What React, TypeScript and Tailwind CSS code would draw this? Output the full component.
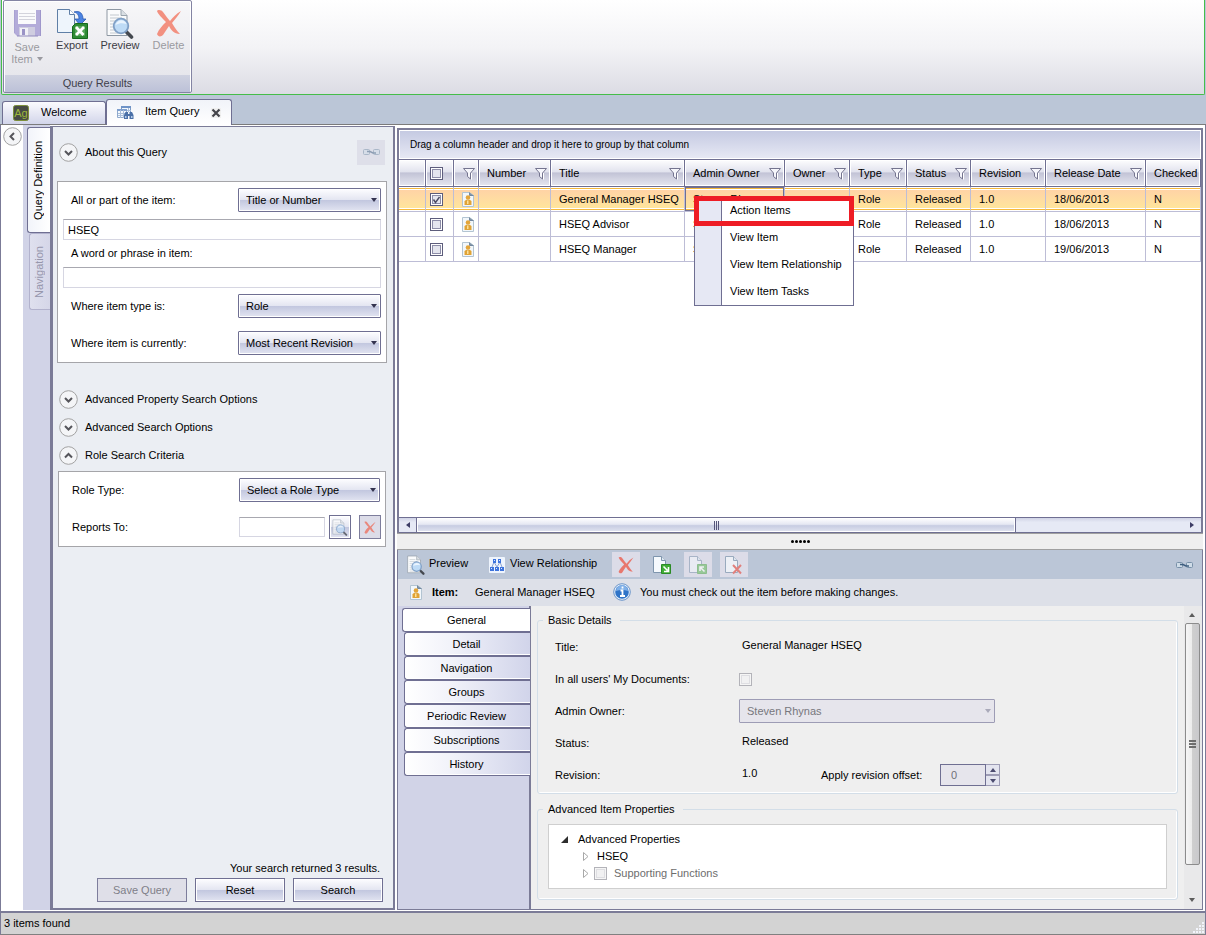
import { useState, type ReactNode } from "react";
import clsx from "clsx";

const face =
  "bg-[linear-gradient(#fdfdff,#e3e5f1_50%,#c2c7df_51%,#e2e4f1)] shadow-[inset_0_0_0_1px_#fff]";

const columns = [
  { label: "Number", width: "w-[72px]", filter: true },
  { label: "Title", width: "w-[134px]", filter: true },
  { label: "Admin Owner", width: "w-[100px]", filter: true },
  { label: "Owner", width: "w-[65px]", filter: true },
  { label: "Type", width: "w-[57px]", filter: true },
  { label: "Status", width: "w-[64px]", filter: true },
  { label: "Revision", width: "w-[75px]", filter: true },
  { label: "Release Date", width: "w-[100px]", filter: true },
  { label: "Checked", width: "w-auto", filter: false },
];

const items = [
  { title: "General Manager HSEQ", date: "18/06/2013" },
  { title: "HSEQ Advisor", date: "18/06/2013" },
  { title: "HSEQ Manager", date: "19/06/2013" },
];

const menuItems = ["Action Items", "View Item", "View Item Relationship", "View Item Tasks"];

const detailTabs = [
  "General",
  "Detail",
  "Navigation",
  "Groups",
  "Periodic Review",
  "Subscriptions",
  "History",
];

function FloppyIcon() {
  return (
    <svg width="27" height="28" viewBox="0 0 27 28">
      <path d="M0 1h27v26H3l-3-3z" fill="#b3abd9" />
      <path d="M0 1v23M26.500 1v26" stroke="#9f97cb" />
      <path d="M4 1h18v14H4z" fill="#fafafc" />
      <path d="M5 4.500h16M5 7.500h16M5 10.500h16" stroke="#d3d3dc" />
      <path d="M5 18h16v9H5z" fill="#cfcde0" />
      <path d="M6 19h8v8H6z" fill="#f1f1f6" />
      <path d="M8 20h3v6H8z" fill="#9a93c6" />
      <path d="M3 27h21" stroke="#918abd" />
    </svg>
  );
}

function ExportIcon() {
  return (
    <svg width="31" height="31" viewBox="0 0 31 31">
      <path d="M.5 1.500h12l5 5v18H.5z" fill="#eef5fc" stroke="#5f7fa6" />
      <path d="M12.500 1.500v5h5" fill="#fff" stroke="#5f7fa6" />
      <path d="M17 4c6-2 9 2 9 7h3l-6 6-5-6h4c0-3-1-6-5-7z" fill="#4b83e2" stroke="#2a5bb4" strokeWidth=".8" />
      <path d="M15.500 18.500l3-3h12v15h-15z" fill="#2e8b34" stroke="#156a1c" />
      <path d="M18 18h10v10H18z" fill="#78c07a" opacity=".5" />
      <path d="M19 19l7.500 8M27 19l-8 8" stroke="#fff" strokeWidth="2.800" />
    </svg>
  );
}

function PreviewIcon({ className }: { className?: string }) {
  return (
    <svg viewBox="0 0 28 31" className={className}>
      <path d="M1 1.500h14l6 6v20H1z" fill="#fafbfc" stroke="#8e98a3" />
      <path d="M15 1.500v6h6" fill="#d9dfe4" stroke="#9aa4ae" />
      <path d="M4 7h9M4 10h12M4 13h5M4 16h3M4 19h3M4 22h5M4 25h8" stroke="#c2c8ce" />
      <path d="M20.500 24l5 5" stroke="#44484f" strokeWidth="3.600" strokeLinecap="round" />
      <circle cx="15" cy="18" r="7.300" fill="#b9d8f5" fillOpacity=".92" stroke="#7f9fc6" strokeWidth="1.800" />
      <path d="M9.500 17c2-6 9-6 11-1-4-1-7-1-11 1z" fill="#eaf4fe" />
    </svg>
  );
}

function CrossIcon({ className, color = "#f29080" }: { className?: string; color?: string }) {
  return (
    <svg viewBox="0 0 26 28" className={className} fill={color}>
      <path d="M1 2C2 0 6 1 7 3c3 4 5 7 7 9 3-4 6-7 11-10-3 5-6 8-9 12 3 5 5 8 8 11-6 0-9-4-11-8-2 3-4 6-6 9-2 2-5 2-6-1 2-5 5-8 9-12C6 9 2 5 1 2z" />
    </svg>
  );
}

function AgLogo() {
  return (
    <svg width="16" height="16" viewBox="0 0 16 16">
      <rect x=".5" y=".5" width="15" height="15" rx="2" fill="#484b44" stroke="#7c8f3a" />
      <text x="8" y="12" fontSize="11" textAnchor="middle" fill="#9db83a" fontFamily="Liberation Sans, sans-serif">
        Ag
      </text>
    </svg>
  );
}

function QueryIcon() {
  return (
    <svg width="17" height="15" viewBox="0 0 17 15">
      <path d="M4.500 1.500h9v8h-9z" fill="#f3f8fd" stroke="#7d9bc4" />
      <path d="M4 1h10v2H4z" fill="#6f93c7" />
      <path d="M.5 4.500h9v8h-9z" fill="#f3f8fd" stroke="#8fa9cd" />
      <path d="M0 4h10v2H0z" fill="#7f9fce" />
      <path d="M1 8.500h8M1 10.500h8M3.500 5v8M6.500 5v8M10 5.500h4M11.500 3v4" stroke="#a9bedb" />
      <path d="M7 14v-4l1.500-3h2.500v2h1.500V7H15l1.500 3v4h-4v-3h-1.500v3z" fill="#4a70a8" />
      <path d="M8 11h1.500v2H8zM14 11h1.500v2H14z" fill="#b5cbe8" />
    </svg>
  );
}

function ChainIcon({ className }: { className?: string }) {
  return (
    <svg width="17" height="8" viewBox="0 0 17 8" fill="none" className={className}>
      <rect x=".5" y="1.500" width="6" height="5" rx="1" fill="#cfdce8" stroke="#7890a8" />
      <rect x="10.500" y="1.500" width="6" height="5" rx="1" fill="#cfdce8" stroke="#7890a8" />
      <path d="M4 3.500h3l3 1.500h3" stroke="#3f5f80" strokeWidth="1.500" />
    </svg>
  );
}

function FunnelIcon() {
  return (
    <svg width="12" height="13" viewBox="0 0 12 13" className="shrink-0">
      <path d="M.5 1.500h11L7.500 6v6l-3-2.500V6z" fill="#f6f6fb" stroke="#74748f" />
      <path d="M8.500 6v6.500" stroke="#fff" />
    </svg>
  );
}

function RoleIcon() {
  return (
    <svg width="12" height="15" viewBox="0 0 12 15">
      <path d="M.5.5h7l4 3v11H.5z" fill="#f2f7fb" stroke="#b3c4d2" />
      <path d="M7.500.5v3h4" fill="#8396a8" stroke="#7388a0" />
      <circle cx="6" cy="5.500" r="2.300" fill="#e3a53a" />
      <path d="M2.500 13V9.500c0-2.500 7-2.500 7 0V13z" fill="#e0a336" />
      <path d="M5 8.500h1.500V12H5z" fill="#fbe09a" />
    </svg>
  );
}

function RelationIcon() {
  return (
    <svg width="16" height="16" viewBox="0 0 16 16">
      <rect width="16" height="16" rx="1" fill="#eef4fd" />
      <path d="M5 5l-2 5M5 5l3 5M11 5l-3 5M11 5l2 5" stroke="#8aa3d4" />
      <path d="M4 2h3v4H4zM9 2h3v4H9zM1 10h4v4H1zM6 10h4v4H6zM11 10h4v4h-4z" fill="#3d73dc" />
      <path d="M5 3h1v1H5zM10 3h1v1h-1zM2 11h1v1H2zM7 11h1v1H7zM12 11h1v1h-1z" fill="#dbe8ff" />
    </svg>
  );
}

function PageIcon({ children }: { children: ReactNode }) {
  return (
    <svg width="19" height="20" viewBox="0 0 19 20">
      <path d="M.5 1.500h8l4 4v12H.5z" fill="#f5f9fd" stroke="#7e95ad" />
      <path d="M8.500 1.500v4h4" fill="#dfe9f2" stroke="#7e95ad" />
      {children}
    </svg>
  );
}

function InfoIcon() {
  return (
    <svg width="18" height="18" viewBox="0 0 18 18">
      <circle cx="9" cy="9" r="8.300" fill="#e4eefa" stroke="#6c95c9" />
      <circle cx="9" cy="9" r="6.800" fill="#2f74c8" />
      <path d="M3 8a6 6 0 0 1 12 0c-4-1.500-8-1.500-12 0z" fill="#7fb0e8" />
      <path d="M9.500 3.500v2M7.500 7.500h2v5M7 13h5" stroke="#fff" strokeWidth="1.800" fill="none" />
    </svg>
  );
}

function Arrow({ dir, className }: { dir: "up" | "down" | "left" | "right"; className?: string }) {
  const d = {
    up: "M0 5l3-4 3 4z",
    down: "M0 1l3 4 3-4z",
    left: "M5 0L1 3l4 3z",
    right: "M1 0l4 3-4 3z",
  }[dir];
  return (
    <svg width="6" height="6" viewBox="0 0 6 6" fill="currentColor" className={className}>
      <path d={d} />
    </svg>
  );
}

function CircleButton({ dir, label }: { dir: "up" | "down" | "left"; label: string }) {
  const d = { up: "M6 11.500L9.500 8l3.500 3.500", down: "M6 8l3.500 3.500L13 8", left: "M11 6L7.500 9.500 11 13" }[dir];
  return (
    <button type="button" aria-label={label} className="shrink-0">
      <svg width="19" height="19" viewBox="0 0 19 19" fill="none">
        <circle cx="9.500" cy="9.500" r="8.800" fill="#f4f5f7" stroke="#a2a2a2" />
        <path d={d} stroke="#55555b" strokeWidth="2" />
      </svg>
    </button>
  );
}

function Accordion({ dir, label }: { dir: "up" | "down"; label: string }) {
  return (
    <div className="flex items-center gap-[7px] h-7 pl-1.5">
      <CircleButton dir={dir} label={label} />
      <span>{label}</span>
    </div>
  );
}

function Select({ id, value, disabled, className }: { id: string; value: string; disabled?: boolean; className?: string }) {
  return (
    <div className={clsx("relative", className)}>
      <select
        id={id}
        disabled={disabled}
        className={clsx(
          "appearance-none w-full h-6 border pl-[7px] pr-3 rounded-[1px] disabled:opacity-100",
          disabled ? "bg-[#e6e5ec] border-[#9d9cb5] text-[#77777d]" : `border-[#6f6f92] text-black ${face}`
        )}
      >
        <option>{value}</option>
      </select>
      <Arrow
        dir="down"
        className={clsx("absolute right-1 top-[9px] pointer-events-none", disabled ? "text-[#aaaaba]" : "text-[#33334f]")}
      />
    </div>
  );
}

function Check({ label, checked, disabled }: { label: string; checked?: boolean; disabled?: boolean }) {
  return (
    <span className="relative block size-[13px]">
      <input
        type="checkbox"
        aria-label={label}
        defaultChecked={checked}
        disabled={disabled}
        className={clsx(
          "peer appearance-none block size-[13px] border",
          disabled
            ? "border-[#b3b3b9] bg-[#f1f1f2] shadow-[inset_0_0_0_1px_#f5f5f5,inset_0_0_0_2px_#dedee2]"
            : "border-[#5d5d7c] bg-[#e4e5ee] shadow-[inset_0_0_0_1px_#fff,inset_0_0_0_2px_#8d8da8]"
        )}
      />
      <svg viewBox="0 0 13 13" fill="none" className="hidden peer-checked:block absolute inset-0 pointer-events-none">
        <path d="M3.500 6.500l2 3 4-5.500" stroke="#4a4a63" strokeWidth="1.400" />
      </svg>
    </span>
  );
}

function RibbonButton({ icon, disabled, className, children }: { icon: ReactNode; disabled?: boolean; className: string; children: ReactNode }) {
  return (
    <button
      type="button"
      disabled={disabled}
      className={clsx("flex flex-col items-center leading-3", disabled ? "text-[#9a9aa0]" : "text-[#3c3c44]", className)}
    >
      <span className="h-8 flex items-center">{icon}</span>
      <span>{children}</span>
    </button>
  );
}

function Ribbon() {
  return (
    <header className="h-[95px] shrink-0 mx-px pl-px border-x border-b border-[#45bd49] rounded-b-[2px] bg-[linear-gradient(#fff,#f3f3f6_50%,#dcdce4)]">
      <div className="w-[189px] h-[93px] flex flex-col border border-[#8384a3] rounded-[2px] bg-[linear-gradient(#f7f7f9,#e3e3e9)] shadow-[inset_0_0_0_1px_#fff]">
        <div className="flex flex-1 pt-[6px] items-start">
          <RibbonButton icon={<FloppyIcon />} disabled className="w-[46px]">
            <span className="block pt-0.5">Save</span>
            <span className="flex items-center justify-center gap-1">
              Item <Arrow dir="down" />
            </span>
          </RibbonButton>
          <RibbonButton icon={<ExportIcon />} className="w-11">Export</RibbonButton>
          <RibbonButton icon={<PreviewIcon className="w-7 h-[31px]" />} className="w-[52px]">Preview</RibbonButton>
          <RibbonButton icon={<CrossIcon className="w-[26px] h-7" />} disabled className="w-[45px]">Delete</RibbonButton>
        </div>
        <div className="h-[17px] mx-px leading-4 text-center text-[#3f3f4b] bg-[linear-gradient(#cfd2e0,#bcc1d8)]">
          Query Results
        </div>
      </div>
    </header>
  );
}

function DocumentTabs() {
  return (
    <nav className="flex h-[30px] shrink-0 items-end pl-[2px] bg-[#bbc6d7] border-b border-[#7b7b7b]">
      <button
        type="button"
        className="flex items-center w-[104px] h-[23px] pl-2.5 pr-3 rounded-t-[3px] border border-b-0 border-[#6f6f92] bg-[linear-gradient(#fbfbfe,#d2d5ea)]"
      >
        <AgLogo />
        <span className="pl-3 pb-0.5">Welcome</span>
      </button>
      <div className="flex items-center w-[126px] h-[26px] -mb-px pl-2.5 rounded-t-[3px] border border-b-0 border-[#6f6f92] bg-[linear-gradient(#f1f3f9,#fff)]">
        <QueryIcon />
        <button type="button" className="pl-[11px] pb-[3px]">Item Query</button>
        <button type="button" aria-label="Close Item Query" className="ml-3 bg-[#f0f0f0]">
          <svg width="10" height="10" viewBox="0 0 10 10">
            <path d="M1.500 1.500l7 7M8.500 1.500l-7 7" stroke="#44444a" strokeWidth="2.200" />
          </svg>
        </button>
      </div>
    </nav>
  );
}

function SideTabs() {
  return (
    <div className="flex shrink-0">
      <div className="w-[22px] pt-0.5 pl-0.5 bg-white">
        <CircleButton dir="left" label="Collapse" />
      </div>
      <div className="flex flex-col items-end w-[27px] pt-0.5 bg-[#d1d3e7]">
        <button
          type="button"
          className="w-[23px] h-[106px] border border-r-0 border-[#6f6f92] rounded-l-[3px] bg-[linear-gradient(90deg,#f2f4fa,#fff)]"
        >
          <span className="block [writing-mode:vertical-rl] rotate-180 leading-5">Query Definition</span>
        </button>
        <button
          type="button"
          className="w-[21px] h-[77px] border border-r-0 border-[#b2b2cd] rounded-l-[3px] bg-[linear-gradient(90deg,#dfe0ee,#d5d6e8)] text-[#9696ac]"
        >
          <span className="block [writing-mode:vertical-rl] rotate-180 leading-[18px]">Navigation</span>
        </button>
      </div>
    </div>
  );
}

const textBox = "border border-[#d6d6e2] border-t-[#a8a8b0] bg-white px-1";

function QueryPanel() {
  return (
    <aside className="flex flex-col w-[345px] shrink-0 mt-px border-2 border-t border-l-[3px] border-[#7b7b97] bg-[#ebeef3]">
      <div className="flex items-center justify-between h-[50px] pr-2">
        <Accordion dir="down" label="About this Query" />
        <button type="button" aria-label="Link" className="flex items-center justify-center w-7 h-[25px] bg-[#dedfe9]">
          <ChainIcon className="opacity-50" />
        </button>
      </div>
      <div className="mt-1 ml-1 mr-1.5 p-1.5 pl-[5px] pr-[5px] pb-[7px] border border-[#a5a5a9] bg-white">
        <div className="flex items-center justify-between pl-2">
          <label htmlFor="match">All or part of the item:</label>
          <Select id="match" value="Title or Number" className="w-[143px]" />
        </div>
        <input aria-label="Item text" defaultValue="HSEQ" className={`block w-full h-[21px] mt-[7px] ${textBox}`} />
        <label htmlFor="phrase" className="block h-[27px] pl-2 leading-[27px]">A word or phrase in item:</label>
        <input id="phrase" className={`block w-full h-[21px] ${textBox}`} />
        <div className="flex items-center justify-between mt-1.5 pl-2">
          <label htmlFor="type">Where item type is:</label>
          <Select id="type" value="Role" className="w-[143px]" />
        </div>
        <div className="flex items-center justify-between mt-[13px] pl-2">
          <label htmlFor="current">Where item is currently:</label>
          <Select id="current" value="Most Recent Revision" className="w-[143px]" />
        </div>
      </div>
      <div className="mt-[22px]">
        <Accordion dir="down" label="Advanced Property Search Options" />
        <Accordion dir="down" label="Advanced Search Options" />
        <Accordion dir="up" label="Role Search Criteria" />
      </div>
      <div className="ml-[5px] mr-[7px] mt-0.5 pl-1.5 pr-1 pt-1.5 pb-[7px] border border-[#a5a5a9] bg-white">
        <div className="flex items-center justify-between pl-[7px] pr-px">
          <label htmlFor="role-type">Role Type:</label>
          <Select id="role-type" value="Select a Role Type" className="w-[141px]" />
        </div>
        <div className="flex items-center mt-[13px] pl-[7px]">
          <label htmlFor="reports" className="flex-1">Reports To:</label>
          <input id="reports" className={`w-[86px] h-5 ${textBox}`} />
          <button type="button" aria-label="Find role" className={`flex items-center justify-center w-[22px] h-6 ml-1 border border-[#6f6f92] ${face}`}>
            <PreviewIcon className="w-4 h-[17px] opacity-75" />
          </button>
          <button type="button" aria-label="Clear role" className="flex items-center justify-center w-[22px] h-6 ml-2 border border-[#7d7d9c] bg-[#dcdce8]">
            <CrossIcon className="w-3 h-[13px]" color="#e9877c" />
          </button>
        </div>
      </div>
      <div className="mt-auto pr-2.5 pb-1.5">
        <p className="h-[17px] pr-[3px] text-right">Your search returned 3 results.</p>
        <div className="flex justify-end gap-2">
          <button type="button" disabled className="w-[90px] h-6 border border-[#7d7d9c] bg-[#dfdfe8] text-[#808088]">Save Query</button>
          <button type="button" className={`w-[90px] h-6 border border-[#6f6f92] ${face}`}>Reset</button>
          <button type="button" className={`w-[90px] h-6 border border-[#6f6f92] ${face}`}>Search</button>
        </div>
      </div>
    </aside>
  );
}

const headCell =
  "h-[27px] p-0 border-r border-b border-[#6f6f92] font-normal text-left bg-[linear-gradient(#fdfdfe,#e2e3ee_45%,#c2c3d6_50%,#e6e7f0)] shadow-[inset_0_0_0_1px_#fff]";
const selectedCell =
  "bg-[linear-gradient(#fff_1px,#f6b93b_1px,#f6b93b_2px,#fff_2px,#fff_3px,#ffd3a6_3px,#ffe59c_21px,#fff_21px,#fff_22px,#f6b93b_22px,#f6b93b_23px,#fff_23px)]";

function ItemGrid() {
  const [selected, setSelected] = useState(0);
  return (
    <section className="relative flex flex-col flex-1 min-h-0 border-2 border-b-0 border-[#7b7b97] bg-white">
      <div className="h-[29px] shrink-0 pl-2.5 leading-[28px] text-[10px] border border-white bg-[linear-gradient(#c5cae2,#e6e8f4)]">
        Drag a column header and drop it here to group by that column
      </div>
      <div className="flex-1 overflow-hidden">
        <table className="w-full table-fixed border-separate border-spacing-0 border-t border-[#6f6f92]">
          <thead>
            <tr>
              <th className={`w-[27px] ${headCell}`} />
              <th className={`w-7 ${headCell}`}>
                <div className="flex pl-1"><Check label="Select all" /></div>
              </th>
              <th className={`w-[25px] ${headCell}`}>
                <div className="flex justify-end pr-[3px]"><FunnelIcon /></div>
              </th>
              {columns.map((c) => (
                <th key={c.label} className={clsx(headCell, c.width)}>
                  <div className="flex items-center justify-between pl-2 pr-[3px]">
                    <span className="whitespace-nowrap">{c.label}</span>
                    {c.filter && <FunnelIcon />}
                  </div>
                </th>
              ))}
            </tr>
          </thead>
          <tbody>
            {items.map((item, i) => {
              const on = i === selected;
              const cell = clsx(
                "h-[25px] p-0 pl-2 border-r border-b border-[#bdbdd6] whitespace-nowrap overflow-hidden",
                on && selectedCell
              );
              return (
                <tr key={item.title} onClick={() => setSelected(i)}>
                  <td className={cell} />
                  <td className={cell}>
                    <div className="-ml-1"><Check label={item.title} checked={i === 0} /></div>
                  </td>
                  <td className={cell}><RoleIcon /></td>
                  <td className={cell} />
                  <td className={cell}>{item.title}</td>
                  <td className={clsx(cell, on && "shadow-[inset_0_0_0_1px_#6f6f92]")}>Steven Rhynas</td>
                  <td className={cell} />
                  <td className={cell}>Role</td>
                  <td className={cell}>Released</td>
                  <td className={cell}>1.0</td>
                  <td className={cell}>{item.date}</td>
                  <td className={cell}>N</td>
                </tr>
              );
            })}
          </tbody>
        </table>
      </div>
      <div className="flex items-center h-4 shrink-0 border-y border-[#6f6f92] bg-[linear-gradient(#d0d3e6,#e6e9f5_30%)] text-[#3d3d66]">
        <button type="button" aria-label="Scroll left" className="flex items-center justify-center w-[18px] h-full border-r border-[#6f6f92]">
          <Arrow dir="left" />
        </button>
        <div className="flex items-center justify-center gap-px w-[599px] h-full border-r border-[#6f6f92] bg-[linear-gradient(#fff,#e6e8f3_45%,#c7cce2_55%,#e2e5f1)] shadow-[inset_0_0_0_1px_#fff]">
          <i className="w-px h-[9px] bg-[#55557a]" />
          <i className="w-px h-[9px] bg-[#55557a]" />
          <i className="w-px h-[9px] bg-[#55557a]" />
        </div>
        <button type="button" aria-label="Scroll right" className="ml-auto px-1.5">
          <Arrow dir="right" />
        </button>
      </div>
      <ContextMenu />
    </section>
  );
}

function ContextMenu() {
  return (
    <ul className="absolute left-[295px] top-[66px] w-40 h-[110px] border border-[#6f6f92] bg-[linear-gradient(90deg,#e6e8f4_26px,#6f6f92_26px,#6f6f92_27px,#fff_27px)]">
      {menuItems.map((label, i) => (
        <li key={label} className="h-[27px]">
          <button
            type="button"
            className={clsx(
              "block text-left whitespace-nowrap",
              i === 0 ? "w-40 h-[30px] -m-px pl-[31px] pb-0.5 border-[5px] border-[#ee1c25]" : "w-full h-full pl-[35px]"
            )}
          >
            {label}
          </button>
        </li>
      ))}
    </ul>
  );
}

function Toolbar() {
  const tool = "flex items-center justify-center w-7 h-[25px]";
  return (
    <div className="flex items-center h-[29px] shrink-0 pl-[9px] pr-[9px] bg-[#bbc6d7]">
      <button type="button" className="flex items-center gap-1 w-[82px]">
        <PreviewIcon className="w-[18px] h-5" />
        <span className="pb-[3px]">Preview</span>
      </button>
      <button type="button" className="flex items-center gap-[5px] w-[123px]">
        <RelationIcon />
        <span className="pb-[3px]">View Relationship</span>
      </button>
      <div className="flex gap-2">
        <button type="button" disabled aria-label="Delete" className={`${tool} bg-[#dcdce8]`}>
          <CrossIcon className="w-4 h-[18px]" color="#e8776d" />
        </button>
        <button type="button" aria-label="Check out" className={tool}>
          <PageIcon>
            <path d="M8.500 9.500h9v9h-9z" fill="#3fae35" stroke="#2a8a25" />
            <path d="M10.500 11.500l4 4M15.500 12v4.500H11" stroke="#fff" strokeWidth="1.600" fill="none" />
          </PageIcon>
        </button>
        <button type="button" disabled aria-label="Check in" className={`${tool} bg-[#dcdce8]`}>
          <span className="opacity-55">
            <PageIcon>
              <path d="M8.500 9.500h9v9h-9z" fill="#5fb857" stroke="#4fa548" />
              <path d="M15.500 16.500l-4-4M11 16v-4h4" stroke="#fff" strokeWidth="1.600" fill="none" />
            </PageIcon>
          </span>
        </button>
        <button type="button" disabled aria-label="Cancel check out" className={`${tool} bg-[#dcdce8]`}>
          <span className="opacity-70">
            <PageIcon>
              <path d="M8 10l8 8.500M16 10l-8 8.500" stroke="#e35a50" strokeWidth="2" />
            </PageIcon>
          </span>
        </button>
      </div>
      <button type="button" aria-label="Link" className="ml-auto"><ChainIcon /></button>
    </div>
  );
}

function DetailRow({ label, htmlFor, children }: { label: string; htmlFor?: string; children: ReactNode }) {
  return (
    <div className="flex items-center h-8">
      <label htmlFor={htmlFor} className="w-[184px] shrink-0 pt-1">{label}</label>
      {children}
    </div>
  );
}

function DetailPane() {
  const legend = "ml-[5px] pl-[5px] pr-2 leading-4";
  const group = "min-w-0 border border-[#d3dee8] rounded-[3px] shadow-[inset_-1px_-1px_0_#fff]";
  return (
    <div className="flex flex-1 min-h-0 bg-[#efefef]">
      <nav className="flex flex-col items-end w-[133px] shrink-0 pt-0.5 bg-[#d1d3e7] border-r-2 border-[#7b7b97]">
        {detailTabs.map((tab, i) => (
          <button
            key={tab}
            type="button"
            className={clsx(
              "h-6 border border-r-0 border-[#6f6f92] rounded-l-[3px] shadow-[inset_0_-1px_0_#fff]",
              i === 0 ? "w-[128px] -mr-px bg-white" : "w-[126px] -mr-px pr-0.5 bg-[linear-gradient(90deg,#fff,#f2f3fa_35%,#d1d4ea)]"
            )}
          >
            {tab}
          </button>
        ))}
      </nav>
      <div className="flex-1 min-w-0 pt-1.5 px-1.5">
        <fieldset className={group}>
          <legend className={legend}>Basic Details</legend>
          <div className="pl-[17px] pt-px pb-1">
            <DetailRow label="Title:"><span className="pl-[3px]">General Manager HSEQ</span></DetailRow>
            <DetailRow label="In all users' My Documents:"><span className="pt-1"><Check label="In all users' My Documents" disabled /></span></DetailRow>
            <DetailRow label="Admin Owner:" htmlFor="admin">
              <Select id="admin" value="Steven Rhynas" disabled className="w-64 mt-1" />
            </DetailRow>
            <DetailRow label="Status:"><span className="pl-[3px]">Released</span></DetailRow>
            <DetailRow label="Revision:">
              <span className="w-[82px] pl-[3px]">1.0</span>
              <label htmlFor="offset" className="w-[119px] pt-1">Apply revision offset:</label>
              <div className="flex w-[60px] h-[22px] mt-1">
                <input id="offset" disabled defaultValue="0" className="w-[46px] h-full pl-2.5 border border-[#6f6f92] bg-[#e6e5ec] text-[#707078]" />
                <div className="flex flex-col w-3.5 text-[#4c4c70]">
                  <button type="button" aria-label="Increase" className="flex flex-1 items-center justify-center border border-l-0 border-[#9d9cb5] bg-[#e3e4ef]"><Arrow dir="up" /></button>
                  <button type="button" aria-label="Decrease" className="flex flex-1 items-center justify-center border border-l-0 border-[#9d9cb5] bg-[#e3e4ef]"><Arrow dir="down" /></button>
                </div>
              </div>
            </DetailRow>
          </div>
        </fieldset>
        <fieldset className={clsx(group, "mt-[7px]")}>
          <legend className={legend}>Advanced Item Properties</legend>
          <div className="mx-2.5 mt-[7px] mb-2.5 pt-1.5 pl-3 h-[65px] border border-[#cfcfcf] bg-white leading-[17px]">
            <div className="flex items-center gap-2.5">
              <svg width="7" height="7"><path d="M7 0v7H0z" fill="#2d2d2d" /></svg>
              Advanced Properties
            </div>
            <div className="flex items-center gap-2 pl-[22px]">
              <svg width="6" height="9"><path d="M.5 .5l4.500 4-4.500 4z" fill="#fff" stroke="#a8a8a8" /></svg>
              HSEQ
            </div>
            <div className="flex items-center pl-[22px] text-[#6d6d6d]">
              <svg width="6" height="9"><path d="M.5 .5l4.500 4-4.500 4z" fill="#fff" stroke="#a8a8a8" /></svg>
              <span className="pl-[5px] pr-[7px]"><Check label="Supporting Functions" disabled /></span>
              Supporting Functions
            </div>
          </div>
        </fieldset>
      </div>
      <div className="flex flex-col items-center w-[18px] shrink-0 pr-0.5 bg-[#e9e9ea] text-[#5c5c5c]">
        <button type="button" aria-label="Scroll up" className="h-[17px]"><Arrow dir="up" /></button>
        <div className="flex flex-col flex-1 items-center justify-center gap-px w-[15px] border border-[#8c8c8c] rounded-[2px] bg-[linear-gradient(90deg,#f6f6f6,#ececec_45%,#cfcfcf_50%,#c9c9cc)]">
          <i className="w-[7px] h-0.5 bg-[#6e6e6e]" />
          <i className="w-[7px] h-0.5 bg-[#6e6e6e]" />
          <i className="w-[7px] h-0.5 bg-[#6e6e6e]" />
        </div>
        <div className="h-[26px]" />
        <button type="button" aria-label="Scroll down" className="h-[18px]"><Arrow dir="down" /></button>
      </div>
    </div>
  );
}

export default function App() {
  return (
    <div className="flex flex-col h-screen overflow-hidden bg-white text-black text-[11px] leading-[14px] font-['Liberation_Sans',Arial,sans-serif]">
      <div className="flex flex-col shrink-0 bg-[#bbc6d7]">
        <Ribbon />
        <DocumentTabs />
      </div>
      <main className="flex flex-1 min-h-0 pb-px border-x border-[#7b7b97]">
        <SideTabs />
        <QueryPanel />
        <div className="flex flex-col flex-1 min-w-0 mt-[3px] ml-[2px] mr-[2px]">
          <ItemGrid />
          <div className="flex items-center justify-center gap-px h-[17px] shrink-0 border-y border-[#a0a0a0] bg-[#efefef]">
            {[0, 1, 2, 3, 4].map((n) => (
              <i key={n} className="size-[3px] rounded-full bg-black" />
            ))}
          </div>
          <div className="flex flex-col h-[360px] shrink-0 border-x border-b border-[#7b7b97]">
            <Toolbar />
            <div className="flex items-center h-[27px] shrink-0 pl-3 pb-px bg-[#dde0e8]">
              <RoleIcon />
              <b className="w-[43px] ml-2.5">Item:</b>
              <span className="w-[138px]">General Manager HSEQ</span>
              <InfoIcon />
              <span className="pl-[9px]">You must check out the item before making changes.</span>
            </div>
            <DetailPane />
          </div>
        </div>
      </main>
      <footer className="relative h-6 shrink-0 pl-[3px] pt-[3px] border border-t-2 border-[#7b7b97] border-b-[#808080] bg-[#d3d3d3]">
        3 items found
        <svg width="12" height="12" className="absolute right-0 bottom-0 text-[#f2f4fb]" fill="currentColor">
          <path d="M9 0h2v2H9zM6 3h2v2H6zM9 3h2v2H9zM3 6h2v2H3zM6 6h2v2H6zM9 6h2v2H9zM0 9h2v2H0zM3 9h2v2H3zM6 9h2v2H6zM9 9h2v2H9z" />
        </svg>
      </footer>
    </div>
  );
}
